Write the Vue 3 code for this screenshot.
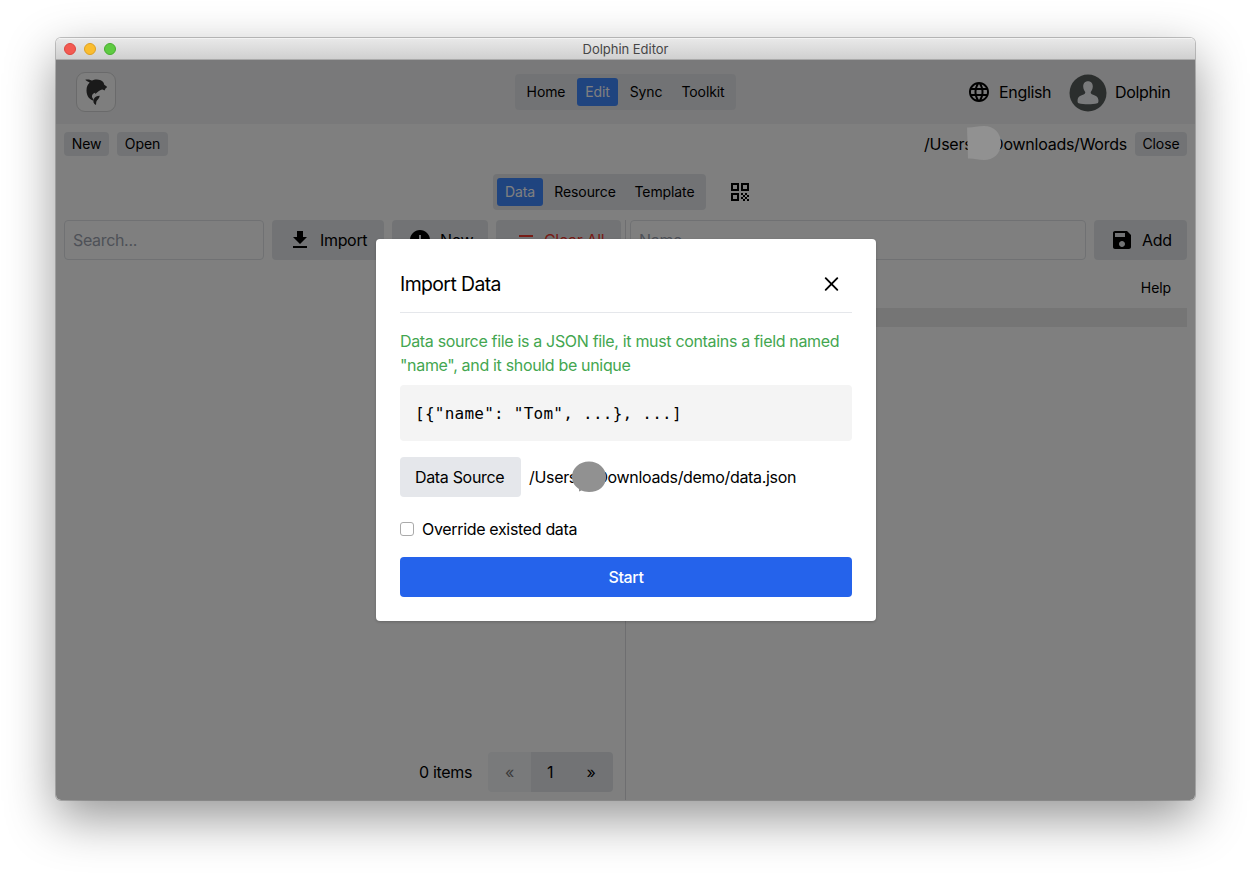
<script setup>
const navTabs = [
  { label: 'Home', w: 54 },
  { label: 'Edit', w: 41, active: true },
  { label: 'Sync', w: 48 },
  { label: 'Toolkit', w: 58 },
]
const dataTabs = [
  { label: 'Data', w: 46, active: true },
  { label: 'Resource', w: 76 },
  { label: 'Template', w: 75 },
]
const code = '[{"name": "Tom", ...}, ...]'
</script>

<template>
  <div class="desktop">
    <div class="window">
      <div class="titlebar">
        <div class="lights"><i class="red"></i><i class="yellow"></i><i class="green"></i></div>
        <span class="wtitle">Dolphin Editor</span>
      </div>
      <div class="content">
        <header class="header">
          <div class="logo">
            <svg viewBox="18 21 120 120" width="40" height="40" fill="#343434">
              <path d="M44 42 C52 40 60 42 65 45 C72 41 84 40 93 44 C101 48 103 53 104 58 L112 64 C113 67 111 69 108 70 L105 76 L99 73 C92 74 87 77 83 81 L75 88 L76 83 C67 84 63 93 67 100 C69 104 71 106 71 109 C58 105 48 94 48 76 C48 64 52 57 58 52 C55 48 49 47 44 42 Z" />
              <path d="M71 103 C75 96 81 94 90 93 C88 101 84 105 81 108 C78 112 79 117 78 122 C70 119 68 111 71 103 Z" />
            </svg>
          </div>
          <nav class="tabs top">
            <span v-for="t in navTabs" :key="t.label" class="tab" :class="{ active: t.active }" :style="{ width: t.w + 'px' }">{{ t.label }}</span>
          </nav>
          <div class="account">
            <svg class="icon" viewBox="0 0 24 24"><path d="M11.99 2C6.47 2 2 6.48 2 12s4.47 10 9.99 10C17.52 22 22 17.52 22 12S17.52 2 11.99 2zm6.93 6h-2.95c-.32-1.25-.78-2.45-1.38-3.56 1.84.63 3.37 1.91 4.33 3.56zM12 4.04c.83 1.2 1.48 2.53 1.91 3.96h-3.82c.43-1.43 1.08-2.76 1.91-3.96zM4.26 14C4.1 13.36 4 12.69 4 12s.1-1.36.26-2h3.38c-.08.66-.14 1.32-.14 2s.06 1.34.14 2H4.26zm.82 2h2.95c.32 1.25.78 2.45 1.38 3.56-1.84-.63-3.37-1.9-4.33-3.56zm2.95-8H5.08c.96-1.66 2.49-2.93 4.33-3.56C8.81 5.55 8.35 6.75 8.03 8zM12 19.96c-.83-1.2-1.48-2.53-1.91-3.96h3.82c-.43 1.43-1.08 2.76-1.91 3.96zM14.34 14H9.66c-.09-.66-.16-1.32-.16-2s.07-1.35.16-2h4.68c.09.65.16 1.32.16 2s-.07 1.34-.16 2zm.25 5.56c.6-1.11 1.06-2.31 1.38-3.56h2.95c-.96 1.65-2.49 2.93-4.33 3.56zM16.36 14c.08-.66.14-1.32.14-2s-.06-1.34-.14-2h3.38c.16.64.26 1.31.26 2s-.1 1.36-.26 2h-3.38z" /></svg>
            <span class="lang">English</span>
            <svg class="avatar" viewBox="0 0 38 38" width="38" height="38">
              <circle cx="19" cy="19" r="18.5" fill="#565c5b" />
              <path d="M19 7.3c3 0 4.9 2.2 4.8 5.3-.1 2.500-1 4-1.900 5.100-.6 1 .1 2.200 1.500 2.800 3.800 1.400 5.700 2.300 6 5.500.1 1.700.1 2.700-1 3.200-5.400 1.300-13.400 1.300-18.800 0-1.100-.5-1.100-1.500-1-3.200.3-3.200 2.200-4.100 6-5.500 1.400-.6 2.100-1.800 1.500-2.800-.9-1.100-1.800-2.600-1.900-5.100-.1-3.100 1.800-5.300 4.800-5.300z" fill="#f3f4f6" />
            </svg>
            <span class="user">Dolphin</span>
          </div>
        </header>

        <div class="filebar">
          <button class="btn sm new">New</button>
          <button class="btn sm open">Open</button>
          <div class="path">
            <span class="p1">/Users/u/Downloads/Words</span>
            <svg class="mask" viewBox="0 0 36 36" width="36" height="36"><path d="M1 2.500C6 3 11 1 18 1C28 1 35 8 35 18C35 29 27 35 18 35C12 35 7 33 2 33.500Z" fill="#919191" /></svg>
          </div>
          <button class="btn sm close">Close</button>
        </div>

        <div class="subnav">
          <nav class="tabs">
            <span v-for="t in dataTabs" :key="t.label" class="tab" :class="{ active: t.active }" :style="{ width: t.w + 'px' }">{{ t.label }}</span>
          </nav>
          <svg class="icon" viewBox="0 0 24 24"><path fill-rule="evenodd" d="M3 11h8V3H3zM5 5h4v4H5zM3 21h8v-8H3zm2-6h4v4H5zM13 3v8h8V3zm6 6h-4V5h4zM19 19h2v2h-2zM13 13h2v2h-2zM15 15h2v2h-2zM13 17h2v2h-2zM15 19h2v2h-2zM17 17h2v2h-2zM17 13h2v2h-2zM19 15h2v2h-2z" /></svg>
        </div>

        <div class="panels">
          <section class="left">
            <div class="row">
              <div class="input search">Search...</div>
              <button class="btn import"><svg class="icon" viewBox="0 0 24 24"><path d="M19 9h-4V3H9v6H5l7 7 7-7zM5 18v2h14v-2H5z" /></svg><span>Import</span></button>
              <button class="btn add-new"><svg class="icon" viewBox="0 0 24 24"><path d="M12 2C6.480 2 2 6.480 2 12s4.480 10 10 10 10-4.480 10-10S17.520 2 12 2zm5 11h-4v4h-2v-4H7v-2h4V7h2v4h4v2z" /></svg><span>New</span></button>
              <button class="btn clear"><svg class="icon" viewBox="0 0 24 24"><path d="M5 13h14v-2H5v2zm-2 4h14v-2H3v2zM7 7v2h14V7H7z" /></svg><span>Clear All</span></button>
            </div>
            <div class="pager">
              <span class="count">0 items</span>
              <span class="prev">«</span>
              <span class="page">1</span>
              <span class="next">»</span>
            </div>
          </section>
          <section class="right">
            <div class="row">
              <div class="input name">Name</div>
              <button class="btn save"><svg class="icon" viewBox="0 0 24 24"><path d="M17 3H5c-1.110 0-2 .9-2 2v14c0 1.100.89 2 2 2h14c1.100 0 2-.9 2-2V7l-4-4zm-5 16c-1.660 0-3-1.340-3-3s1.340-3 3-3 3 1.340 3 3-1.340 3-3 3zm3-10H5V5h10v4z" /></svg><span>Add</span></button>
            </div>
            <div class="help">Help</div>
            <div class="strip"></div>
          </section>
        </div>

        <div class="overlay">
          <div class="modal">
            <div class="mhead">
              <span class="mtitle">Import Data</span>
              <svg width="24" height="24" viewBox="0 0 24 24"><path d="M6.700 6.200L18.300 17.800M18.300 6.200L6.700 17.800" stroke="#000" stroke-width="1.900" stroke-linecap="round" /></svg>
            </div>
            <p class="tip"><span>Data source file is a JSON file, it must contains a field named</span><br><span>"name", and it should be unique</span></p>
            <pre class="code">{{ code }}</pre>
            <div class="source">
              <button class="btn ds">Data Source</button>
              <div class="path">
                <span class="p2">/Users/u/Downloads/demo/data.json</span>
                <svg class="mask m2" viewBox="0 0 36 34" width="36" height="34"><path d="M18 1.500C27.500 1.500 35 8 35 17S28 32 18 32C15 32 12 31 10.500 30.500L8 31.500L8 29C3.500 26 1 22 1 17C1 8 8.500 1.500 18 1.500Z" fill="#919191" /></svg>
              </div>
            </div>
            <label class="check"><i></i><span>Override existed data</span></label>
            <button class="start">Start</button>
          </div>
        </div>
      </div>
    </div>
  </div>
</template>

<style>
body { background: #fff; }
</style>

<style scoped>
* { box-sizing: border-box; }
.desktop {
  width: 1251px; height: 874px; padding: 38px 56px 74px; overflow: hidden;
  font: 16px/24px Inter, "Liberation Sans", sans-serif; letter-spacing: -0.33px; color: #000;
}
.window {
  width: 1139px; height: 762px; border-radius: 5px; overflow: hidden;
  box-shadow: 0 0 0 1px rgba(0,0,0,.22), 0 18px 50px rgba(0,0,0,.42);
}
.titlebar {
  height: 22px; position: relative; display: flex; align-items: center; justify-content: center;
  background: linear-gradient(#e8e8e8, #d0d0d0); border-top: 1px solid #f3f3f3; border-bottom: 1px solid #aaa;
}
.lights { position: absolute; left: 8px; top: 4px; display: flex; gap: 8px; }
.lights i { width: 12px; height: 12px; border-radius: 50%; border: 1px solid; }
.red { background: #f35a52; border-color: #dc463e !important; }
.yellow { background: #fabd2f; border-color: #dda023 !important; }
.green { background: #5fcb42; border-color: #48ac30 !important; }
.wtitle { font-size: 13px; letter-spacing: -0.02px; color: #464646; }
.content { position: relative; height: 740px; background: #fff; display: flex; flex-direction: column; }
.header { height: 64px; flex: none; background: #f3f3f4; display: grid; grid-template-columns: 439px auto 1fr; align-items: center; padding: 0 24px 0 20px; }
.logo { width: 40px; height: 40px; border: 1px solid #d4d5d6; border-radius: 9px; background: #fcfcfc; display: flex; align-items: center; justify-content: center; }
.tabs { height: 36px; display: flex; align-items: center; gap: 4px; padding: 4px; border-radius: 4px; background: #e5e7eb; font-size: 14px; letter-spacing: -0.1px; }
.tab { height: 28px; line-height: 28px; text-align: center; border-radius: 3px; white-space: nowrap; }
.tab.active { background: #3f88ff; color: #fff; }
.top { width: 221px; }
.account { display: flex; align-items: center; justify-content: flex-end; }
.icon { width: 24px; height: 24px; flex: none; fill: currentColor; display: block; }
.lang { margin-left: 8px; width: 53px; white-space: nowrap; }
.avatar { margin: 2px 8px 0 17px; }
.user { width: 56px; white-space: nowrap; }
.btn { border: 0; background: #e5e7eb; border-radius: 4px; height: 40px; padding: 0 16px; color: #000; font: inherit; letter-spacing: inherit; white-space: nowrap; display: flex; align-items: center; gap: 8px; flex: none; }
.sm { height: 24px; font-size: 14px; padding: 0; justify-content: center; letter-spacing: -0.1px; }
.filebar { height: 24px; margin: 8px 8px 0; flex: none; display: flex; align-items: center; gap: 8px; }
.new { width: 45px; }
.open { width: 51px; }
.close { width: 52px; }
.path { position: relative; white-space: nowrap; }
.filebar .path { margin-left: auto; width: 203px; }
.p1 { letter-spacing: -0.25px; }
.mask { position: absolute; z-index: 3; left: 42px; top: -7px; }
.m2 { left: 42px; top: -5px; }
.subnav { height: 36px; margin-top: 18px; flex: none; display: flex; align-items: center; justify-content: flex-start; gap: 22px; padding-left: 437px; }
.panels { margin-top: 10px; flex: 1; display: flex; }
.left { width: 570px; border-right: 1px solid #dcdde0; padding: 0 4px 8px 8px; display: flex; flex-direction: column; justify-content: space-between; }
.right { flex: 1; padding: 0 8px 0 4px; }
.row { display: flex; gap: 8px; }
.input { height: 40px; border: 1px solid #e0e2e6; border-radius: 4px; padding: 0 8px; line-height: 38px; color: #9ca3af; }
.search { width: 200px; }
.name { flex: 1; }
.import { width: 112px; }
.add-new { width: 96px; }
.clear { width: 125px; color: #ef3b2f; }
.save { width: 93px; }
.help { height: 48px; padding: 4px 16px 0 0; line-height: 48px; text-align: right; font-size: 14px; letter-spacing: -0.1px; }
.strip { height: 19px; background: #ebebeb; }
.pager { display: flex; justify-content: flex-end; line-height: 40px; padding-right: 8px; text-align: center; }
.count { margin-right: 16px; }
.prev { width: 43px; background: #f3f4f6; color: #777; border-radius: 4px 0 0 4px; }
.page { width: 38px; background: #e5e7eb; }
.next { width: 44px; background: #e5e7eb; border-radius: 0 4px 4px 0; }
.overlay { position: absolute; inset: 0; z-index: 2; background: rgba(0,0,0,.5); display: flex; justify-content: center; padding-top: 179px; }
.modal { width: 500px; height: 382px; margin-left: 1px; background: #fff; border-radius: 4px; padding: 24px; box-shadow: 0 1px 3px rgba(0,0,0,.2); }
.mhead { height: 50px; padding: 0 9px 8px 0; border-bottom: 1px solid #e5e7eb; display: flex; align-items: center; justify-content: space-between; }
.mtitle { font-size: 19.4px; letter-spacing: -0.58px; }
.tip { margin: 16px 0 8px; color: #43a650; white-space: nowrap; }
.code { margin: 0; height: 56px; padding: 17px 15px 15px; border-radius: 4px; background: #f4f4f4; font: 16px/24px "DejaVu Sans Mono", monospace; letter-spacing: 0.25px; }
.source { display: flex; align-items: center; gap: 8px; margin-top: 16px; }
.ds { width: 121px; padding: 0 15px; }
.check { display: flex; align-items: center; gap: 8px; margin-top: 20px; white-space: nowrap; }
.check i { width: 14px; height: 14px; border: 1px solid #aaa; border-radius: 3px; }
.start { display: block; width: 100%; height: 40px; margin-top: 16px; border: 0; border-radius: 4px; background: #2563eb; color: #fff; font: inherit; font-weight: 500; letter-spacing: inherit; }
</style>
